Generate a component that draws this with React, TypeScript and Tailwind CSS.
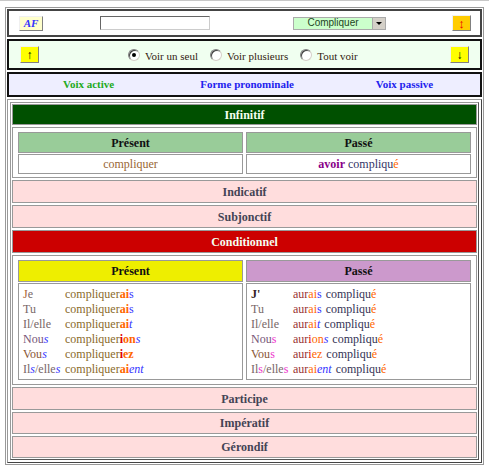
import React from 'react'

type Part = { t: string; c: string; b?: boolean; i?: boolean }

const serif = "font-['Liberation_Serif',serif]"

const Radio = ({ on }: { on?: boolean }) => (
    <span className="inline-flex w-[12px] h-[12px] rounded-full border border-[#808080] border-b-[#d4d0c8] border-r-[#d4d0c8] bg-white items-center justify-center shadow-[inset_1px_1px_0_#404040]">
        {on && <span className="w-[4px] h-[4px] rounded-full bg-black" />}
    </span>
)

const Btn = ({ children, cls }: { children: React.ReactNode; cls: string }) => (
    <div className={`flex items-center justify-center border border-t-[#f0f0f0] border-l-[#f0f0f0] border-b-[#808080] border-r-[#808080] ${cls}`}>
        {children}
    </div>
)

const Bar = ({ label, h, active, bg }: { label: string; h: string; active?: boolean; bg?: string }) => (
    <div className={`${h} flex items-center justify-center border border-[#999] font-bold text-[12px] ${active ? `${bg} text-[#f4fff0]` : 'bg-[#ffdddd] text-[#444455]'}`}>
        {label}
    </div>
)

const Word = ({ parts }: { parts: Part[] }) => (
    <span>
        {parts.map((p, k) => (
            <span key={k} className={`${p.b ? 'font-bold' : ''} ${p.i ? 'italic' : ''}`} style={{ color: p.c }}>{p.t}</span>
        ))}
    </span>
)

const stem = '#8a6a2a'
const org = '#ff6600'
const blu = '#3333ff'
const red = '#dd0000'
const pron = '#776666'

const present: { p: Part[]; v: Part[] }[] = [
    { p: [{ t: 'J', c: '#aa6633' }, { t: 'e', c: pron }], v: [{ t: 'compliquer', c: stem }, { t: 'ai', c: org, b: true }, { t: 's', c: blu }] },
    { p: [{ t: 'Tu', c: pron }], v: [{ t: 'compliquer', c: stem }, { t: 'ai', c: org, b: true }, { t: 's', c: blu }] },
    { p: [{ t: 'Il/elle', c: pron }], v: [{ t: 'compliquer', c: stem }, { t: 'ai', c: org, b: true }, { t: 't', c: blu, i: true }] },
    { p: [{ t: 'Nou', c: '#775577' }, { t: 's', c: blu, i: true }], v: [{ t: 'compliquer', c: stem }, { t: 'i', c: red, b: true }, { t: 'on', c: org, b: true }, { t: 's', c: blu, i: true }] },
    { p: [{ t: 'Vou', c: '#885533' }, { t: 's', c: blu, i: true }], v: [{ t: 'compliquer', c: stem }, { t: 'i', c: red, b: true }, { t: 'ez', c: org, b: true }] },
    { p: [{ t: 'Il', c: pron }, { t: 's', c: blu, i: true }, { t: '/elle', c: pron }, { t: 's', c: blu, i: true }], v: [{ t: 'compliquer', c: stem }, { t: 'ai', c: org, b: true }, { t: 'ent', c: blu, i: true }] },
]

const aux = '#993333'
const pp = '#333355'
const mag = '#ee33cc'

const passe: { p: Part[]; v: Part[] }[] = [
    { p: [{ t: "J'", c: '#332222', b: true }], v: [{ t: 'aur', c: aux }, { t: 'ai', c: org }, { t: 's', c: blu }] },
    { p: [{ t: 'Tu', c: pron }], v: [{ t: 'aur', c: aux }, { t: 'ai', c: org }, { t: 's', c: blu }] },
    { p: [{ t: 'Il/elle', c: pron }], v: [{ t: 'aur', c: aux }, { t: 'ai', c: org }, { t: 't', c: blu, i: true }] },
    { p: [{ t: 'Nou', c: '#775577' }, { t: 's', c: mag }], v: [{ t: 'aur', c: aux }, { t: 'i', c: red }, { t: 'on', c: org }, { t: 's', c: blu, i: true }] },
    { p: [{ t: 'Vou', c: '#885533' }, { t: 's', c: mag }], v: [{ t: 'aur', c: aux }, { t: 'i', c: red }, { t: 'ez', c: org }] },
    { p: [{ t: 'Il', c: pron }, { t: 's', c: mag }, { t: '/elle', c: pron }, { t: 's', c: mag }], v: [{ t: 'aur', c: aux }, { t: 'ai', c: org }, { t: 'ent', c: blu, i: true }] },
]

const App = () => {
    return (
        <div className={`w-[489px] h-[475px] bg-white border-t border-[#c8c8c8] ${serif} text-[11px] leading-none`}>
            <div className="ml-[5px] mt-[6px] w-[479px] border border-[#999] p-px flex flex-col gap-[2px]">

                {/* search row */}
                <div className="h-[28px] border-2 border-[#444] flex items-center bg-white">
                    <Btn cls="ml-[10px] w-[24px] h-[15px] bg-[#ffffcc]">
                        <span className="text-[#3333ff] font-bold italic text-[11px]">AF</span>
                    </Btn>
                    <div className="ml-[57px] w-[110px] h-[14px] bg-white border border-t-[#666] border-l-[#666] border-b-[#ccc] border-r-[#ccc]" />
                    <div className="ml-[83px] w-[93px] h-[13px] flex border border-[#aaa] bg-[#ccffcc]">
                        <div className="flex-1 flex items-center justify-center font-['Liberation_Sans',sans-serif] text-[10px] text-[#224422]">Compliquer</div>
                        <div className="w-[13px] bg-[#d4d0c8] border-l border-[#aaa] flex items-center justify-center">
                            <span className="w-0 h-0 border-l-[3px] border-r-[3px] border-t-[3px] border-l-transparent border-r-transparent border-t-black" />
                        </div>
                    </div>
                    <Btn cls="ml-[66px] w-[19px] h-[16px] bg-[#ffcc00]">
                        <span className="text-[#ee0000] text-[13px]">↕</span>
                    </Btn>
                </div>

                {/* display mode */}
                <div className="h-[31px] border-2 border-[#111] flex items-center bg-[#f0fff0]">
                    <Btn cls="ml-[11px] w-[19px] h-[17px] bg-[#ffff00]">
                        <span className="text-black text-[12px]">↑</span>
                    </Btn>
                    <div className="ml-[89px] flex items-center gap-[5px]">
                        <Radio on />
                        <span className="mt-[3px] text-[#332211]">Voir un seul</span>
                    </div>
                    <div className="ml-[12px] flex items-center gap-[5px]">
                        <Radio />
                        <span className="mt-[3px] text-[#332211]">Voir plusieurs</span>
                    </div>
                    <div className="ml-[12px] flex items-center gap-[5px]">
                        <Radio />
                        <span className="mt-[3px] text-[#332211]">Tout voir</span>
                    </div>
                    <Btn cls="ml-auto mr-[11px] w-[19px] h-[17px] bg-[#ffff00]">
                        <span className="text-black text-[12px]">↓</span>
                    </Btn>
                </div>

                {/* voices */}
                <div className="h-[25px] border-2 border-[#111] flex items-center bg-[#eeeeff] font-bold">
                    <span className="ml-[54px] text-[#22aa22]">Voix active</span>
                    <span className="ml-[86px] text-[#2222ee]">Forme pronominale</span>
                    <span className="ml-[82px] text-[#2222ee]">Voix passive</span>
                </div>

                {/* tenses */}
                <div className="border border-[#999] border-b-[#444] border-r-[#444] p-[2px]">
                    <div className="border border-[#999] border-b-[#555] border-r-[#555] p-px flex flex-col gap-[2px]">
                        <Bar label="Infinitif" h="h-[21px]" active bg="bg-[#005000]" />
                        <div className="border border-[#999] px-[5px] pt-[4px] pb-[3px] grid grid-cols-2 gap-x-[3px] gap-y-px">
                            <div className="h-[21px] flex items-center justify-center bg-[#99cc99] border border-[#999] font-bold text-[12px] text-[#111]">Présent</div>
                            <div className="h-[21px] flex items-center justify-center bg-[#99cc99] border border-[#999] font-bold text-[12px] text-[#111]">Passé</div>
                            <div className="h-[20px] flex items-center justify-center border border-[#999] text-[12px] text-[#996633]">compliquer</div>
                            <div className="h-[20px] flex items-center justify-center border border-[#999] text-[12px]">
                                <span className="font-bold text-[#880088]">avoir</span>
                                <span className="ml-[3px] text-[#333366]">compliqu</span>
                                <span className="text-[#ff6600]">é</span>
                            </div>
                        </div>
                        <Bar label="Indicatif" h="h-[23px]" />
                        <Bar label="Subjonctif" h="h-[23px]" />
                        <Bar label="Conditionnel" h="h-[23px]" active bg="bg-[#cc0000]" />
                        <div className="border border-[#999] px-[5px] py-[4px] grid grid-cols-2 gap-x-[3px] gap-y-px">
                            <div className="h-[22px] flex items-center justify-center bg-[#eeee00] border border-[#999] font-bold text-[12px] text-[#111]">Présent</div>
                            <div className="h-[22px] flex items-center justify-center bg-[#cc99cc] border border-[#999] font-bold text-[12px] text-[#111]">Passé</div>
                            <div className="h-[97px] border border-[#999] pl-[4px] pt-[4px] text-[12px] flex flex-col gap-[3px]">
                                {present.map((r, k) => (
                                    <div key={k} className="flex h-[12px] items-center">
                                        <span className="w-[42px]"><Word parts={r.p} /></span>
                                        <Word parts={r.v} />
                                    </div>
                                ))}
                            </div>
                            <div className="h-[97px] border border-[#999] pl-[4px] pt-[4px] text-[12px] flex flex-col gap-[3px]">
                                {passe.map((r, k) => (
                                    <div key={k} className="flex h-[12px] items-center">
                                        <span className="w-[42px]"><Word parts={r.p} /></span>
                                        <Word parts={r.v} />
                                        <span className="ml-[4px]"><Word parts={[{ t: 'compliqu', c: pp }, { t: 'é', c: org }]} /></span>
                                    </div>
                                ))}
                            </div>
                        </div>
                        <Bar label="Participe" h="h-[23px]" />
                        <Bar label="Impératif" h="h-[22px]" />
                        <Bar label="Gérondif" h="h-[22px]" />
                    </div>
                </div>
            </div>
        </div>
    )
}

export default App
